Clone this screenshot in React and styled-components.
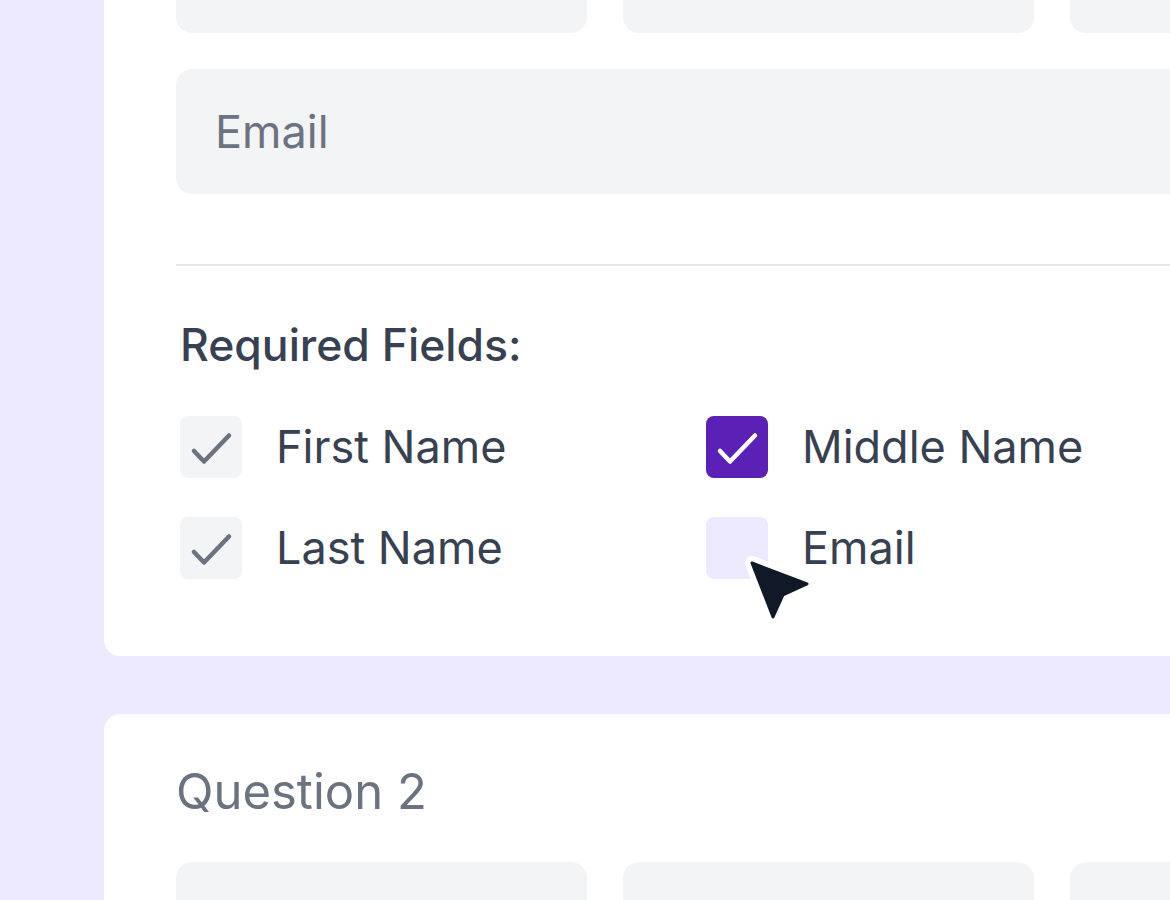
import React from 'react'
import styled, { createGlobalStyle } from 'styled-components'

const GlobalStyle = createGlobalStyle`
  html, body {
    margin: 0;
    padding: 0;
    background: #ede9fe;
    overflow: hidden;
  }
  body {
    font-family: Inter, "Noto Sans", "Liberation Sans", sans-serif;
    -webkit-font-smoothing: antialiased;
  }
`

// the form is scrolled: the top of the first card sits above the frame
const Page = styled.div`
  margin-top: -140px;
  padding-left: 104px;
  display: flex;
  flex-direction: column;
  gap: 58px;
  width: 1500px;
`

const Card = styled.section`
  background: #ffffff;
  border-radius: 16px;
  padding: 48px 72px 77px;
  display: flex;
  flex-direction: column;
`

const QuestionTitle = styled.h2`
  margin: 0 0 40px;
  font-size: 49px;
  line-height: 60px;
  font-weight: 400;
  color: #6b7280;
`

const FieldRow = styled.div`
  display: grid;
  grid-template-columns: repeat(3, 411px);
  gap: 36px;
`

const Field = styled.div`
  height: 125px;
  background: #f3f4f6;
  border-radius: 16px;
  display: flex;
  align-items: center;
  padding-left: 39px;
  box-sizing: border-box;
  font-size: 45px;
  color: #6b7280;
`

const WideField = styled(Field)`
  margin-top: 36px;
`

const Divider = styled.hr`
  border: 0;
  height: 2px;
  background: #e5e7eb;
  margin: 70px 0 54px;
`

const Section = styled.div`
  padding-left: 4px;
`

const SectionLabel = styled.div`
  font-size: 44.5px;
  line-height: 50px;
  font-weight: 500;
  color: #374151;
  margin-bottom: 46px;
`

const OptionGrid = styled.div`
  display: grid;
  grid-template-columns: 526px auto;
  row-gap: 39px;
`

const Option = styled.label`
  position: relative;
  display: flex;
  align-items: center;
  gap: 34px;
  font-size: 45px;
  line-height: 56px;
  color: #374151;
`

const Box = styled.span`
  width: 62px;
  height: 62px;
  border-radius: 8px;
  flex-shrink: 0;
  display: flex;
  background: ${p =>
    p.$state === 'on' ? '#5b21b6' : p.$state === 'hover' ? '#ede9fe' : '#f3f4f6'};
`

const Pointer = styled.svg`
  position: absolute;
  left: 24px;
  top: 23px;
  width: 90px;
  height: 90px;
  pointer-events: none;
`

function Check({ color }) {
  return (
    <svg width="62" height="62" viewBox="0 0 62 62">
      <path
        d="M14 35 L24 45.5 L49 19.5"
        fill="none"
        stroke={color}
        strokeWidth="4.5"
        strokeLinecap="round"
        strokeLinejoin="round"
      />
    </svg>
  )
}

function Cursor() {
  const d = 'M22 23 L77 44 L53 55 L43 77 Z'
  return (
    <Pointer viewBox="0 0 90 90">
      <path d={d} fill="#ffffff" stroke="#ffffff" strokeWidth="14" strokeLinejoin="round" />
      <path d={d} fill="#111827" stroke="#111827" strokeWidth="3" strokeLinejoin="round" />
    </Pointer>
  )
}

const options = [
  { label: 'First Name', state: 'muted' },
  { label: 'Middle Name', state: 'on' },
  { label: 'Last Name', state: 'muted' },
  { label: 'Email', state: 'hover' },
]

export default function App() {
  return (
    <>
      <GlobalStyle />
      <Page>
        <Card>
          <FieldRow>
            <Field />
            <Field />
            <Field />
          </FieldRow>
          <WideField>Email</WideField>
          <Divider />
          <Section>
            <SectionLabel>Required Fields:</SectionLabel>
            <OptionGrid>
              {options.map(o => (
                <Option key={o.label}>
                  <Box $state={o.state}>
                    {o.state === 'muted' && <Check color="#6b7280" />}
                    {o.state === 'on' && <Check color="#ffffff" />}
                  </Box>
                  {o.label}
                  {o.state === 'hover' && <Cursor />}
                </Option>
              ))}
            </OptionGrid>
          </Section>
        </Card>
        <Card>
          <QuestionTitle>Question 2</QuestionTitle>
          <FieldRow>
            <Field />
            <Field />
            <Field />
          </FieldRow>
        </Card>
      </Page>
    </>
  )
}
